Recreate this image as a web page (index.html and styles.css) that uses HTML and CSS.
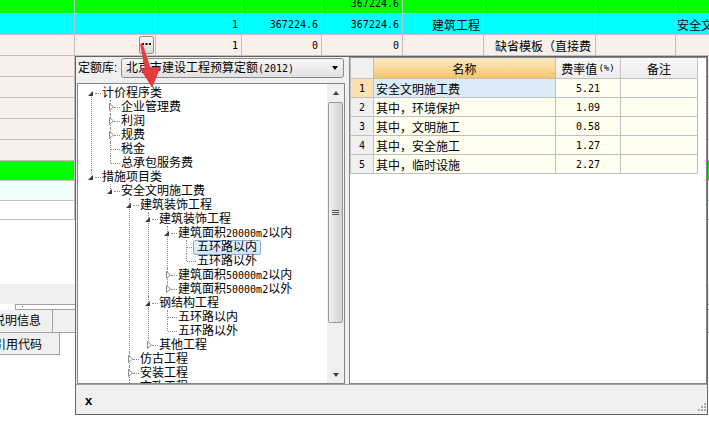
FILE: index.html
```html
<!DOCTYPE html>
<html>
<head>
<meta charset="utf-8">
<link rel="stylesheet" href="styles.css">
</head>
<body>
<div class="app">
  <div class="sheet">
    <div class="r g h21">
      <div class="c w1"></div><div class="c w2"></div><div class="c w3"></div><div class="c w4"></div>
      <div class="c w5 rt"><span class="num">367224.6</span></div>
      <div class="c w6"></div><div class="c w7"></div><div class="c w8"></div><div class="c w9"></div>
    </div>
    <div class="r cy h21">
      <div class="c w1"></div><div class="c w2"></div>
      <div class="c w3 rt"><span class="num">1</span></div>
      <div class="c w4 rt"><span class="num">367224.6</span></div>
      <div class="c w5 rt"><span class="num">367224.6</span></div>
      <div class="c w6 rt">建筑工程</div>
      <div class="c w7"></div><div class="c w8"></div>
      <div class="c w9 lt">安全文明施工费</div>
    </div>
    <div class="r bz h21">
      <div class="c w1"></div>
      <div class="c w2 rt btncell"><span class="dots"><svg width="9" height="2" viewBox="0 0 9 2"><rect x="0" y="0" width="2" height="2" fill="#000"/><rect x="3.5" y="0" width="2" height="2" fill="#000"/><rect x="7" y="0" width="2" height="2" fill="#000"/></svg></span></div>
      <div class="c w3 rt"><span class="num">1</span></div>
      <div class="c w4 rt"><span class="num">0</span></div>
      <div class="c w5 rt"><span class="num">0</span></div>
      <div class="c w6"></div>
      <div class="c w7 tmpl">缺省模板（直接费</div>
      <div class="c w8"></div><div class="c w9"></div>
    </div>
    <div class="r bz h21"><div class="c w1"></div><div class="c w9"></div></div>
    <div class="r bz h21"><div class="c w1"></div><div class="c w9"></div></div>
    <div class="r bz h21"><div class="c w1"></div><div class="c w9"></div></div>
    <div class="r bz h21"><div class="c w1"></div><div class="c w9"></div></div>
    <div class="r bz h21"><div class="c w1"></div><div class="c w9"></div></div>
    <div class="r g h20"><div class="c w1"></div><div class="c w9"></div></div>
    <div class="r mint h20"><div class="c w1"></div><div class="c w9"></div></div>
    <div class="r wh h19"><div class="c w1"></div><div class="c w9"></div></div>
  </div>

  <div class="lower">
    <div class="blank"></div>
    <div class="band"></div>
    <div class="hscroll"><span class="bdot"></span></div>
    <div class="tabrow1"><div class="tab1"><span class="tabtxt t1">说明信息</span></div></div>
    <div class="tab2"><span class="tabtxt t2">引用代码</span></div>
  </div>

  <div class="popup">
    <div class="main">
      <div class="lp">
        <div class="filter">
          <span class="flabel">定额库:</span>
          <div class="select">
            <span class="seltext">北京市建设工程预算定额<span class="num">(2012)</span></span>
            <span class="darr"></span>
          </div>
        </div>
        <div class="treebox">
          <div class="treeview">
            <ul class="lvl root">
              <li class="ex"><div class="row"><span class="tw"></span><span class="lb">计价程序类</span></div>
                <ul class="lvl">
                  <li class="co"><div class="row"><span class="tw"><svg class="cv" width="5" height="8" viewBox="0 0 5 8"><path d="M0.5 0.5 L4.5 4 L0.5 7.5 Z" fill="#fff" stroke="#8a8a8a"/></svg></span><span class="lb">企业管理费</span></div></li>
                  <li class="co"><div class="row"><span class="tw"><svg class="cv" width="5" height="8" viewBox="0 0 5 8"><path d="M0.5 0.5 L4.5 4 L0.5 7.5 Z" fill="#fff" stroke="#8a8a8a"/></svg></span><span class="lb">利润</span></div></li>
                  <li class="co"><div class="row"><span class="tw"><svg class="cv" width="5" height="8" viewBox="0 0 5 8"><path d="M0.5 0.5 L4.5 4 L0.5 7.5 Z" fill="#fff" stroke="#8a8a8a"/></svg></span><span class="lb">规费</span></div></li>
                  <li class="nt"><div class="row"><span class="tw"></span><span class="lb">税金</span></div></li>
                  <li class="nt"><div class="row"><span class="tw"></span><span class="lb">总承包服务费</span></div></li>
                </ul>
              </li>
              <li class="ex"><div class="row"><span class="tw"></span><span class="lb">措施项目类</span></div>
                <ul class="lvl">
                  <li class="ex"><div class="row"><span class="tw"></span><span class="lb">安全文明施工费</span></div>
                    <ul class="lvl">
                      <li class="ex"><div class="row"><span class="tw"></span><span class="lb">建筑装饰工程</span></div>
                        <ul class="lvl">
                          <li class="ex"><div class="row"><span class="tw"></span><span class="lb">建筑装饰工程</span></div>
                            <ul class="lvl">
                              <li class="ex"><div class="row"><span class="tw"></span><span class="lb">建筑面积<span class="h">20000m2</span>以内</span></div>
                                <ul class="lvl">
                                  <li class="nt"><div class="row"><span class="tw"></span><span class="lb sel">五环路以内</span></div></li>
                                  <li class="nt"><div class="row"><span class="tw"></span><span class="lb">五环路以外</span></div></li>
                                </ul>
                              </li>
                              <li class="co"><div class="row"><span class="tw"><svg class="cv" width="5" height="8" viewBox="0 0 5 8"><path d="M0.5 0.5 L4.5 4 L0.5 7.5 Z" fill="#fff" stroke="#8a8a8a"/></svg></span><span class="lb">建筑面积<span class="h">50000m2</span>以内</span></div></li>
                              <li class="co"><div class="row"><span class="tw"><svg class="cv" width="5" height="8" viewBox="0 0 5 8"><path d="M0.5 0.5 L4.5 4 L0.5 7.5 Z" fill="#fff" stroke="#8a8a8a"/></svg></span><span class="lb">建筑面积<span class="h">50000m2</span>以外</span></div></li>
                            </ul>
                          </li>
                          <li class="ex"><div class="row"><span class="tw"></span><span class="lb">钢结构工程</span></div>
                            <ul class="lvl">
                              <li class="nt"><div class="row"><span class="tw"></span><span class="lb">五环路以内</span></div></li>
                              <li class="nt"><div class="row"><span class="tw"></span><span class="lb">五环路以外</span></div></li>
                            </ul>
                          </li>
                          <li class="co"><div class="row"><span class="tw"><svg class="cv" width="5" height="8" viewBox="0 0 5 8"><path d="M0.5 0.5 L4.5 4 L0.5 7.5 Z" fill="#fff" stroke="#8a8a8a"/></svg></span><span class="lb">其他工程</span></div></li>
                        </ul>
                      </li>
                      <li class="co"><div class="row"><span class="tw"><svg class="cv" width="5" height="8" viewBox="0 0 5 8"><path d="M0.5 0.5 L4.5 4 L0.5 7.5 Z" fill="#fff" stroke="#8a8a8a"/></svg></span><span class="lb">仿古工程</span></div></li>
                      <li class="co"><div class="row"><span class="tw"><svg class="cv" width="5" height="8" viewBox="0 0 5 8"><path d="M0.5 0.5 L4.5 4 L0.5 7.5 Z" fill="#fff" stroke="#8a8a8a"/></svg></span><span class="lb">安装工程</span></div></li>
                      <li class="co"><div class="row"><span class="tw"><svg class="cv" width="5" height="8" viewBox="0 0 5 8"><path d="M0.5 0.5 L4.5 4 L0.5 7.5 Z" fill="#fff" stroke="#8a8a8a"/></svg></span><span class="lb">市政工程</span></div></li>
                    </ul>
                  </li>
                </ul>
              </li>
            </ul>
          </div>
          <div class="vscroll">
            <div class="sbtn"><span class="uarr"></span></div>
            <div class="thumb"><span class="grip"></span></div>
            <div class="track"></div>
            <div class="sbtn"><span class="sdarr"></span></div>
          </div>
        </div>
      </div>
      <div class="splitter"></div>
      <div class="rp">
        <div class="grid">
          <div class="hc rn"></div>
          <div class="hc hn">名称</div>
          <div class="hc">费率值<span class="pct">(%)</span></div>
          <div class="hc">备注</div>

          <div class="rn cur"><span class="num">1</span></div>
          <div class="dc nm selc">安全文明施工费</div>
          <div class="dc ct"><span class="num">5.21</span></div>
          <div class="dc"></div>

          <div class="rn"><span class="num">2</span></div>
          <div class="dc nm">其中，环境保护</div>
          <div class="dc ct"><span class="num">1.09</span></div>
          <div class="dc"></div>

          <div class="rn"><span class="num">3</span></div>
          <div class="dc nm">其中，文明施工</div>
          <div class="dc ct"><span class="num">0.58</span></div>
          <div class="dc"></div>

          <div class="rn"><span class="num">4</span></div>
          <div class="dc nm">其中，安全施工</div>
          <div class="dc ct"><span class="num">1.27</span></div>
          <div class="dc"></div>

          <div class="rn"><span class="num">5</span></div>
          <div class="dc nm">其中，临时设施</div>
          <div class="dc ct"><span class="num">2.27</span></div>
          <div class="dc"></div>
        </div>
      </div>
    </div>
    <div class="bar">
      <span class="close">x</span>
      <svg class="sizegrip" width="12" height="12" viewBox="0 0 12 12">
        <rect x="9" y="2" width="2" height="2" fill="#a8a8a8"/>
        <rect x="6" y="5" width="2" height="2" fill="#a8a8a8"/>
        <rect x="9" y="5" width="2" height="2" fill="#a8a8a8"/>
        <rect x="3" y="8" width="2" height="2" fill="#a8a8a8"/>
        <rect x="6" y="8" width="2" height="2" fill="#a8a8a8"/>
        <rect x="9" y="8" width="2" height="2" fill="#a8a8a8"/>
      </svg>
    </div>
  </div>

  <svg class="arrow" width="32" height="50" viewBox="132 40 32 50">
    <path d="M140 44 L142.5 43.5 L151 69 L145 70 Z" fill="#e63c3c"/>
    <path d="M141 69 L160 67 L152 87 Z" fill="#e63c3c" stroke="#d02828" stroke-width="0.8" stroke-linejoin="round"/>
  </svg>
</div>
</body>
</html>
```

FILE: styles.css
```css
html, body {
  margin: 0;
  padding: 0;
  background: #ffffff;
}
body {
  font-family: "Liberation Sans", "Noto Sans CJK SC", sans-serif;
  font-size: 12px;
  color: #000;
}
.app {
  position: relative;
  width: 709px;
  height: 447px;
  overflow: hidden;
  background: #fff;
}
.num {
  font-family: "DejaVu Sans Mono", monospace;
  font-size: 10px;
}

/* background sheet */
.sheet {
  margin-top: -7px;
}
.r {
  display: flex;
  box-sizing: border-box;
  border-bottom: 1px solid #c0c0c0;
}
.h21 { height: 21px; }
.h20 { height: 20px; }
.h19 { height: 19px; }
.g { background: #00ff00; }
.cy { background: #00ffff; }
.bz { background: #f9f0ea; }
.mint { background: #effff9; }
.wh { background: #ffffff; }
.c {
  box-sizing: border-box;
  height: 100%;
  border-right: 1px solid #c0c0c0;
  padding: 0 3px;
  display: flex;
  align-items: center;
  overflow: hidden;
  white-space: nowrap;
  flex: none;
}
.rt { justify-content: flex-end; }
.lt { padding-left: 1px; }
.w1 { width: 75px; }
.w2 { width: 81px; }
.w3 { width: 86px; }
.w4 { width: 80px; }
.w5 { width: 81px; }
.w6 { width: 81px; }
.w7 { width: 112px; }
.w8 { width: 80px; }
.w9 { flex: 1; border-right: none; }
.tmpl { padding-left: 11px; }
.btncell { padding-right: 1px; }
.dots {
  box-sizing: border-box;
  width: 15px;
  height: 18px;
  border: 1px solid #8e8f8f;
  border-radius: 2px;
  background: linear-gradient(#f6f6f6, #dadada);
  display: flex;
  justify-content: center;
  padding-top: 6px;
}
.dots svg { display: block; }

/* lower-left panel */
.blank { height: 64px; }
.band { height: 20px; background: #f0f0f0; }
.hscroll {
  box-sizing: border-box;
  height: 6px;
  margin-left: 15px;
  border: 1px solid #a0a0a0;
  border-right: none;
  background: #fff;
  position: relative;
}
.bdot {
  display: block;
  width: 1px;
  height: 1px;
  margin: 1px 0 0 6px;
  background: #2020a0;
}
.tabrow1 {
  box-sizing: border-box;
  height: 23px;
  background: #f0f0f0;
  border-bottom: 1px solid #a0a0a0;
}
.tab1 {
  box-sizing: border-box;
  width: 53px;
  height: 100%;
  border-right: 1px solid #a0a0a0;
  display: flex;
  align-items: center;
  overflow: hidden;
}
.tab2 {
  box-sizing: border-box;
  width: 60px;
  height: 22px;
  background: #f0f0f0;
  border-right: 1px solid #a0a0a0;
  border-bottom: 1px solid #a0a0a0;
  display: flex;
  align-items: center;
  overflow: hidden;
  padding-top: 2px;
}
.tabtxt { white-space: nowrap; line-height: 14px; }
.t1 { margin-left: -7px; }
.t2 { margin-left: -6px; }

/* popup */
.popup {
  position: absolute;
  left: 75px;
  top: 56px;
  width: 633px;
  height: 359px;
  box-sizing: border-box;
  border: 1px solid #646464;
  background: #f0f0f0;
  display: flex;
  flex-direction: column;
}
.main {
  height: 327px;
  display: flex;
  flex: none;
}
.lp {
  width: 269px;
  display: flex;
  flex-direction: column;
  flex: none;
}
.filter {
  height: 26px;
  box-sizing: border-box;
  padding: 1px 0 0 2px;
  display: flex;
  align-items: flex-start;
}
.flabel {
  width: 43px;
  height: 20px;
  line-height: 20px;
  white-space: nowrap;
  flex: none;
}
.select {
  box-sizing: border-box;
  width: 223px;
  height: 20px;
  border: 1px solid #8a8a8a;
  border-radius: 3px;
  background: linear-gradient(#f8f8f8, #ececec 50%, #e2e2e2);
  display: flex;
  align-items: center;
  padding-left: 4px;
  padding-right: 5px;
}
.seltext {
  flex: 1;
  white-space: nowrap;
  line-height: 16px;
}
.darr {
  width: 0;
  height: 0;
  border-left: 3.5px solid transparent;
  border-right: 3.5px solid transparent;
  border-top: 4px solid #000;
}
.treebox {
  box-sizing: border-box;
  height: 301px;
  margin-left: 1px;
  width: 268px;
  border: 1px solid #828790;
  background: #fff;
  display: flex;
}
.treeview {
  flex: 1;
  overflow: hidden;
  padding-top: 2px;
}
.lvl {
  list-style: none;
  margin: 0;
  padding: 0;
}
.lvl .lvl { padding-left: 19px; }
.lvl li { position: relative; }
.lvl li::before {
  content: "";
  position: absolute;
  left: 13px;
  top: 0;
  bottom: 0;
  border-left: 1px dotted #8c8c8c;
}
.lvl li:last-child::before {
  bottom: auto;
  height: 7px;
}
.root > li:first-child::before { top: 7px; }
.row {
  display: flex;
  align-items: center;
  height: 14px;
  white-space: nowrap;
  position: relative;
}
.tw {
  position: relative;
  width: 24px;
  height: 14px;
  flex: none;
}
.tw::after {
  content: "";
  position: absolute;
  left: 17px;
  top: 7px;
  width: 6px;
  border-top: 1px dotted #8c8c8c;
}
.nt > .row > .tw::after {
  left: 14px;
  width: 9px;
}
.ex > .row > .tw::before {
  content: "";
  position: absolute;
  left: 10px;
  top: 5px;
  width: 0;
  height: 0;
  border-left: 5px solid transparent;
  border-bottom: 5px solid #3a3a3a;
  z-index: 1;
}
.cv {
  position: absolute;
  left: 12px;
  top: 3px;
  display: block;
  z-index: 1;
}
.lb {
  line-height: 14px;
  position: relative;
  z-index: 1;
}
.h {
  font-family: "DejaVu Sans Mono", monospace;
  font-size: 10px;
}
.lb.sel {
  box-sizing: border-box;
  line-height: 13px;
  padding: 0 3px;
  margin-left: -4px;
  border: 1px solid #84acdd;
  border-radius: 2px;
  background: linear-gradient(#eef5fd, #d0e4fa);
}

/* tree scrollbar */
.vscroll {
  width: 17px;
  flex: none;
  background: #f0f0f0;
  display: flex;
  flex-direction: column;
}
.sbtn {
  height: 17px;
  flex: none;
  display: flex;
  align-items: center;
  justify-content: center;
}
.uarr {
  width: 0;
  height: 0;
  border-left: 3.5px solid transparent;
  border-right: 3.5px solid transparent;
  border-bottom: 4px solid #404040;
}
.sdarr {
  width: 0;
  height: 0;
  border-left: 3.5px solid transparent;
  border-right: 3.5px solid transparent;
  border-top: 4px solid #404040;
}
.thumb {
  box-sizing: border-box;
  height: 221px;
  margin: 1px 1px 0 1px;
  border: 1px solid #9a9a9a;
  border-radius: 2px;
  background: linear-gradient(90deg, #f2f2f2, #e0e0e0 50%, #d2d2d2);
  display: flex;
  align-items: center;
  justify-content: center;
  flex: none;
}
.grip {
  width: 7px;
  height: 5px;
  border-top: 1px solid #555;
  border-bottom: 1px solid #555;
  position: relative;
  box-sizing: border-box;
}
.grip::after {
  content: "";
  position: absolute;
  left: 0;
  right: 0;
  top: 1px;
  border-top: 1px solid #555;
}
.track { flex: 1; }

.splitter {
  width: 4px;
  flex: none;
}
.rp {
  box-sizing: border-box;
  width: 358px;
  flex: none;
  border: 1px solid #828790;
  background: #fff;
}
.grid {
  display: grid;
  grid-template-columns: 23px 182px 65px 77px;
  grid-template-rows: 21px;
  grid-auto-rows: 19px;
  width: max-content;
  border-left: 1px solid #c0c0c0;
}
.grid > div {
  box-sizing: border-box;
  border-right: 1px solid #c0c0c0;
  border-bottom: 1px solid #c0c0c0;
  display: flex;
  align-items: center;
  white-space: nowrap;
  overflow: hidden;
}
.hc {
  justify-content: center;
  background: linear-gradient(#f8f8f8, #ececec);
}
.hc.hn {
  background: linear-gradient(#fdebc4, #f9d692 60%, #f5c46a);
}
.pct {
  font-family: "DejaVu Sans Mono", monospace;
  font-size: 9px;
  margin-left: 1px;
}
.rn {
  justify-content: center;
  background: #f0f0f0;
}
.hc.rn { background: #f0f0f0; }
.rn.cur { background: #fbe1b0; }
.dc {
  background: #fffff0;
}
.dc.nm { padding-left: 2px; }
.dc.ct { justify-content: center; }
.dc.selc { background: #dcebf8; }

.bar {
  flex: 1;
  box-sizing: border-box;
  border-top: 1px solid #a0a0a0;
  display: flex;
  align-items: center;
  padding-left: 9px;
  position: relative;
}
.close {
  font-family: "Liberation Sans", sans-serif;
  font-weight: bold;
  font-size: 13px;
  line-height: 13px;
  padding-top: 2px;
}
.sizegrip {
  margin-left: auto;
  align-self: flex-end;
  margin-bottom: 1px;
  display: block;
}

.arrow {
  position: absolute;
  left: 132px;
  top: 40px;
  display: block;
}
```
